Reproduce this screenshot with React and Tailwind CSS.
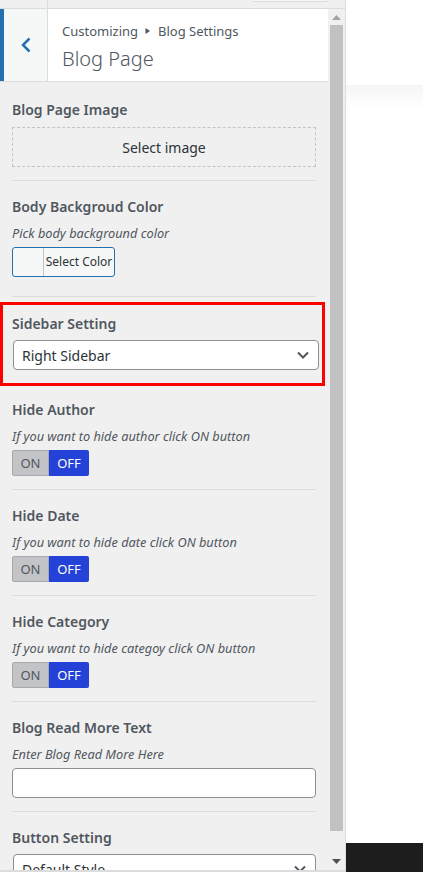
function Toggle() {
  return (
    <div className="mt-[4px] flex h-[26px] w-[77px] text-[13px] leading-none">
      <span className="flex w-[37px] items-center justify-center rounded-l-[2px] border border-[#a7aaad] bg-[#c3c4c7] text-[#50575e]">
        ON
      </span>
      <span className="flex flex-1 items-center justify-center rounded-r-[2px] bg-[#2441d8] text-white">
        OFF
      </span>
    </div>
  );
}

function Chevron() {
  return (
    <svg width="14" height="10" viewBox="0 0 14 10" className="shrink-0">
      <polyline points="2,2.5 7,7.5 12,2.5" fill="none" stroke="#50575e" strokeWidth="2" />
    </svg>
  );
}

function Select({ value }) {
  return (
    <div className="flex h-[30px] items-center justify-between rounded-[4px] border border-[#8c8f94] bg-white pl-[8px] pr-[8px] text-[14px] text-[#2c3338]">
      <span>{value}</span>
      <Chevron />
    </div>
  );
}

function Title({ children }) {
  return <div className="text-[14px] font-semibold leading-[20px] text-[#50575e]">{children}</div>;
}

function Desc({ children }) {
  return <div className="mt-[6px] text-[12.75px] italic leading-[20px] text-[#50575e]">{children}</div>;
}

function ToggleSection({ title, desc }) {
  return (
    <div className="mx-[12px] border-b border-[#dcdcde] pb-[13px] pt-[16px]">
      <Title>{title}</Title>
      <Desc>{desc}</Desc>
      <Toggle />
    </div>
  );
}

export default function App() {
  return (
    <div className="flex h-[872px] w-[423px] overflow-hidden bg-white font-['Noto_Sans',sans-serif]">
      <div className="flex w-[346px] shrink-0 flex-col border-r border-[#dcdcde] bg-[#f0f0f1]">
        {/* top strip */}
        <div className="flex h-[9px] shrink-0 border-b border-[#dcdcde]">
          <div className="w-[48px] border-r border-[#dcdcde]" />
          <div className="flex flex-1 justify-end pr-[17px]">
            <div className="h-[2px] w-[76px] rounded-b-[3px] border-x border-b border-[#dcdcde] bg-[#f6f7f7]" />
          </div>
        </div>

        <div className="flex min-h-0 flex-1">
          {/* content */}
          <div className="min-w-0 flex-1 overflow-hidden">
            <div className="flex h-[73px] border-b border-[#dcdcde] bg-white">
              <div className="flex w-[48px] shrink-0 items-center justify-center border-l-4 border-r border-l-[#2271b1] border-r-[#dcdcde] bg-[#f6f7f7]">
                <svg width="14" height="18" viewBox="0 0 14 18">
                  <polyline points="10.5,2.5 4,9 10.5,15.5" fill="none" stroke="#2271b1" strokeWidth="2.5" />
                </svg>
              </div>
              <div className="flex flex-col justify-center pl-[14px] pt-[4px] text-[#50575e]">
                <div className="flex items-center text-[13px] leading-[18px]">
                  Customizing
                  <svg width="6" height="8" viewBox="0 0 6 8" className="mx-[7px]">
                    <polygon points="0.5,1 5,4 0.5,7" fill="#50575e" />
                  </svg>
                  Blog Settings
                </div>
                <div className="mt-[6px] text-[20px] font-light leading-[26px]">Blog Page</div>
              </div>
            </div>

            {/* Blog page image */}
            <div className="mx-[12px] border-b border-[#dcdcde] pb-[13px] pt-[18px]">
              <Title>Blog Page Image</Title>
              <div className="mt-[7px] flex h-[40px] items-center justify-center border border-dashed border-[#c3c4c7] text-[14px] text-[#2c3338]">
                Select image
              </div>
            </div>

            {/* Body color */}
            <div className="mx-[12px] border-b border-[#dcdcde] pb-[19px] pt-[16px]">
              <Title>Body Backgroud Color</Title>
              <Desc>Pick body background color</Desc>
              <div className="mt-[4px] flex h-[30px] w-[103px] overflow-hidden rounded-[3px] border border-[#2271b1] bg-[#f6f7f7] text-[12px] text-[#2c3338]">
                <div className="w-[31px] border-r border-[#c3c4c7]" />
                <div className="flex flex-1 items-center justify-center">Select Color</div>
              </div>
            </div>

            {/* Sidebar setting (highlighted) */}
            <div className="mr-[3px] mt-[5px] border-[3px] border-[#ff0000] pb-[13px] pl-[9px] pr-[3px] pt-[9px]">
              <Title>Sidebar Setting</Title>
              <div className="ml-[1px] mt-[6px]">
                <Select value="Right Sidebar" />
              </div>
            </div>

            <div className="mx-[12px] border-b border-[#dcdcde] pb-[13px] pt-[14px]">
              <Title>Hide Author</Title>
              <Desc>If you want to hide author click ON button</Desc>
              <Toggle />
            </div>
            <ToggleSection title="Hide Date" desc="If you want to hide date click ON button" />
            <ToggleSection title="Hide Category" desc="If you want to hide categoy click ON button" />

            <div className="mx-[12px] border-b border-[#dcdcde] pb-[13px] pt-[16px]">
              <Title>Blog Read More Text</Title>
              <Desc>Enter Blog Read More Here</Desc>
              <div className="mt-[4px] h-[30px] rounded-[4px] border border-[#8c8f94] bg-white" />
            </div>

            <div className="mx-[12px] pt-[16px]">
              <Title>Button Setting</Title>
              <div className="ml-[1px] mt-[6px]">
                <Select value="Default Style" />
              </div>
            </div>
          </div>

          {/* scrollbar */}
          <div className="flex w-[17px] shrink-0 flex-col bg-[#f0f0f0]">
            <div className="flex h-[16px] items-center justify-center">
              <svg width="9" height="5" viewBox="0 0 9 5">
                <polygon points="4.5,0 9,5 0,5" fill="#a3a3a3" />
              </svg>
            </div>
            <div className="mx-[2px] h-[806px] bg-[#c1c1c1]" />
            <div className="flex flex-1 items-end justify-center pb-[6px]">
              <svg width="9" height="5" viewBox="0 0 9 5">
                <polygon points="0,0 9,0 4.5,5" fill="#505050" />
              </svg>
            </div>
          </div>
        </div>

        <div className="h-[2px] shrink-0 bg-[#dcdcde]" />
      </div>

      {/* preview side */}
      <div className="flex flex-1 flex-col">
        <div className="h-[85px]" />
        <div className="h-[24px] bg-gradient-to-b from-[#f5f5f5] to-white" />
        <div className="flex-1" />
        <div className="h-[29px] bg-[#1d1d1d]" />
      </div>
    </div>
  );
}
